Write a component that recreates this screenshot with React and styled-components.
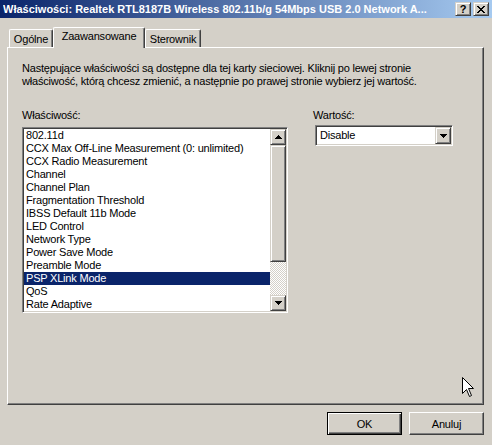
import styled, { createGlobalStyle } from "styled-components";

const GlobalStyle = createGlobalStyle`
  html, body {
    margin: 0;
    padding: 0;
    background: #d4d0c8;
  }
  * {
    box-sizing: border-box;
  }
`;

const Window = styled.div`
  width: 492px;
  height: 445px;
  position: relative;
  overflow: hidden;
  display: flex;
  flex-direction: column;
  background: #d4d0c8;
  font-family: "Liberation Sans", Arial, sans-serif;
  font-size: 11px;
  color: #000;
`;

const TitleBar = styled.div`
  height: 18px;
  display: flex;
  align-items: center;
  padding: 0 3px 0 3px;
  background: linear-gradient(to right, #0a246a, #a6caf0);
`;

const TitleText = styled.div`
  flex: 1;
  min-width: 0;
  color: #fff;
  font-weight: bold;
  line-height: 18px;
  white-space: nowrap;
  overflow: hidden;
`;

const CaptionButton = styled.div`
  width: 16px;
  height: 14px;
  margin-left: 2px;
  display: flex;
  align-items: center;
  justify-content: center;
  background: #d4d0c8;
  border: 1px solid;
  border-color: #d4d0c8 #404040 #404040 #d4d0c8;
  box-shadow: inset 1px 1px #fff, inset -1px -1px #808080;
  font-weight: bold;
  font-size: 11px;
  line-height: 12px;
`;

const Body = styled.div`
  flex: 1;
  display: flex;
  flex-direction: column;
  padding: 9px 8px 0 7px;
  letter-spacing: -0.2px;
`;

const TabStrip = styled.div`
  height: 20px;
  display: flex;
  align-items: flex-end;
  padding-left: 2px;
  position: relative;
  z-index: 1;
`;

const Tab = styled.div`
  width: ${({ $w }) => $w}px;
  height: ${({ $active }) => ($active ? 21 : 18)}px;
  margin-bottom: ${({ $active }) => ($active ? -1 : 0)}px;
  padding-top: ${({ $active }) => ($active ? 2 : 3)}px;
  text-align: center;
  line-height: 13px;
  background: #d4d0c8;
  border-top: 1px solid #fff;
  border-left: 1px solid #fff;
  border-right: 1px solid #404040;
  border-radius: 2px 2px 0 0;
  box-shadow: inset -1px 0 #808080;
  white-space: nowrap;
`;

const Panel = styled.div`
  height: 358px;
  display: flex;
  flex-direction: column;
  padding: 14px 14px;
  border: 1px solid;
  border-color: #fff #404040 #404040 #fff;
  box-shadow: inset -1px -1px #808080;
`;

const Description = styled.div`
  line-height: 13px;
  white-space: nowrap;
`;

const Columns = styled.div`
  display: flex;
  margin-top: 21px;
`;

const Column = styled.div`
  display: flex;
  flex-direction: column;
  width: ${({ $w }) => $w}px;
  margin-left: ${({ $ml }) => $ml || 0}px;
`;

const Label = styled.div`
  line-height: 13px;
  margin-bottom: ${({ $mb }) => $mb}px;
`;

const Sunken = styled.div`
  border: 1px solid;
  border-color: #808080 #fff #fff #808080;
  box-shadow: inset 1px 1px #404040, inset -1px -1px #d4d0c8;
  padding: 1px;
  background: #fff;
`;

const ListBox = styled(Sunken)`
  height: 186px;
  display: flex;
`;

const Items = styled.div`
  flex: 1;
  overflow: hidden;
`;

const Item = styled.div`
  height: 13px;
  line-height: 13px;
  padding-left: 2px;
  white-space: nowrap;
  background: ${({ $sel }) => ($sel ? "#0a246a" : "transparent")};
  color: ${({ $sel }) => ($sel ? "#fff" : "#000")};
`;

const ScrollBar = styled.div`
  width: 16px;
  display: flex;
  flex-direction: column;
`;

const RaisedBox = styled.div`
  background: #d4d0c8;
  border: 1px solid;
  border-color: #d4d0c8 #404040 #404040 #d4d0c8;
  box-shadow: inset 1px 1px #fff, inset -1px -1px #808080;
`;

const ArrowButton = styled(RaisedBox)`
  width: 16px;
  height: 16px;
  display: flex;
  align-items: center;
  justify-content: center;
  flex: none;
`;

const Thumb = styled(RaisedBox)`
  height: ${({ $h }) => $h}px;
  flex: none;
`;

const Track = styled.div`
  flex: 1;
  background: repeating-conic-gradient(#fff 0 25%, #d4d0c8 0 50%) 0 0 / 2px 2px;
`;

const Combo = styled(Sunken)`
  width: 138px;
  height: 21px;
  display: flex;
  align-items: center;
  margin-left: 2px;
`;

const ComboText = styled.div`
  flex: 1;
  padding-left: 3px;
  line-height: 13px;
`;

const ComboButton = styled(RaisedBox)`
  width: 16px;
  height: 17px;
  display: flex;
  align-items: center;
  justify-content: center;
`;

const Footer = styled.div`
  display: flex;
  justify-content: flex-end;
  gap: 7px;
  margin-top: 7px;
`;

const Button = styled.div`
  width: 75px;
  height: 23px;
  display: flex;
  align-items: center;
  justify-content: center;
  background: #d4d0c8;
  border: 1px solid;
  border-color: ${({ $def }) =>
    $def ? "#000" : "#fff #404040 #404040 #fff"};
  box-shadow: ${({ $def }) =>
    $def
      ? "inset 1px 1px #fff, inset -1px -1px #404040, inset -2px -2px #808080"
      : "inset -1px -1px #808080"};
`;

const Cursor = styled.svg`
  position: absolute;
  left: 462px;
  top: 377px;
`;

const UpArrow = () => (
  <svg width="7" height="4" viewBox="0 0 7 4">
    <path d="M3 0h1v1h1v1h1v1h1v1H0V3h1V2h1V1h1z" fill="#000" />
  </svg>
);

const DownArrow = () => (
  <svg width="7" height="4" viewBox="0 0 7 4">
    <path d="M0 0h7v1H6v1H5v1H4v1H3V3H2V2H1V1H0z" fill="#000" />
  </svg>
);

const items = [
  "802.11d",
  "CCX Max Off-Line Measurement (0: unlimited)",
  "CCX Radio Measurement",
  "Channel",
  "Channel Plan",
  "Fragmentation Threshold",
  "IBSS Default 11b Mode",
  "LED Control",
  "Network Type",
  "Power Save Mode",
  "Preamble Mode",
  "PSP XLink Mode",
  "QoS",
  "Rate Adaptive",
];

export default function App() {
  return (
    <Window>
      <GlobalStyle />
      <TitleBar>
        <TitleText>
          Właściwości: Realtek RTL8187B Wireless 802.11b/g 54Mbps USB 2.0 Network A...
        </TitleText>
        <CaptionButton>?</CaptionButton>
        <CaptionButton>
          <svg width="8" height="7" viewBox="0 0 8 7">
            <path
              d="M0 0h2v1h1v1h2V1h1V0h2v1H7v1H6v1H5v1h1v1h1v1h1v1H6V6H5V5H3v1H2v1H0V6h1V5h1V4h1V3H2V2H1V1H0z"
              fill="#000"
            />
          </svg>
        </CaptionButton>
      </TitleBar>
      <Body>
        <TabStrip>
          <Tab $w={44}>Ogólne</Tab>
          <Tab $w={92} $active>Zaawansowane</Tab>
          <Tab $w={56}>Sterownik</Tab>
        </TabStrip>
        <Panel>
          <Description>
            Następujące właściwości są dostępne dla tej karty sieciowej. Kliknij po lewej stronie
            <br />
            właściwość, którą chcesz zmienić, a następnie po prawej stronie wybierz jej wartość.
          </Description>
          <Columns>
            <Column $w={266}>
              <Label $mb={5}>Właściwość:</Label>
              <ListBox>
                <Items>
                  {items.map((name) => (
                    <Item key={name} $sel={name === "PSP XLink Mode"}>
                      {name}
                    </Item>
                  ))}
                </Items>
                <ScrollBar>
                  <ArrowButton>
                    <UpArrow />
                  </ArrowButton>
                  <Thumb $h={117} />
                  <Track />
                  <ArrowButton>
                    <DownArrow />
                  </ArrowButton>
                </ScrollBar>
              </ListBox>
            </Column>
            <Column $w={140} $ml={25}>
              <Label $mb={3}>Wartość:</Label>
              <Combo>
                <ComboText>Disable</ComboText>
                <ComboButton>
                  <DownArrow />
                </ComboButton>
              </Combo>
            </Column>
          </Columns>
        </Panel>
        <Footer>
          <Button $def>OK</Button>
          <Button>Anuluj</Button>
        </Footer>
      </Body>
      <Cursor width="12" height="21" viewBox="0 0 12 21">
        <path
          d="M0.5 0.5 V16.5 L4.5 12.5 L7.5 19.5 L9.5 18.5 L6.5 11.5 H11.5 Z"
          fill="#fff"
          stroke="#000"
          strokeWidth="1"
        />
      </Cursor>
    </Window>
  );
}
